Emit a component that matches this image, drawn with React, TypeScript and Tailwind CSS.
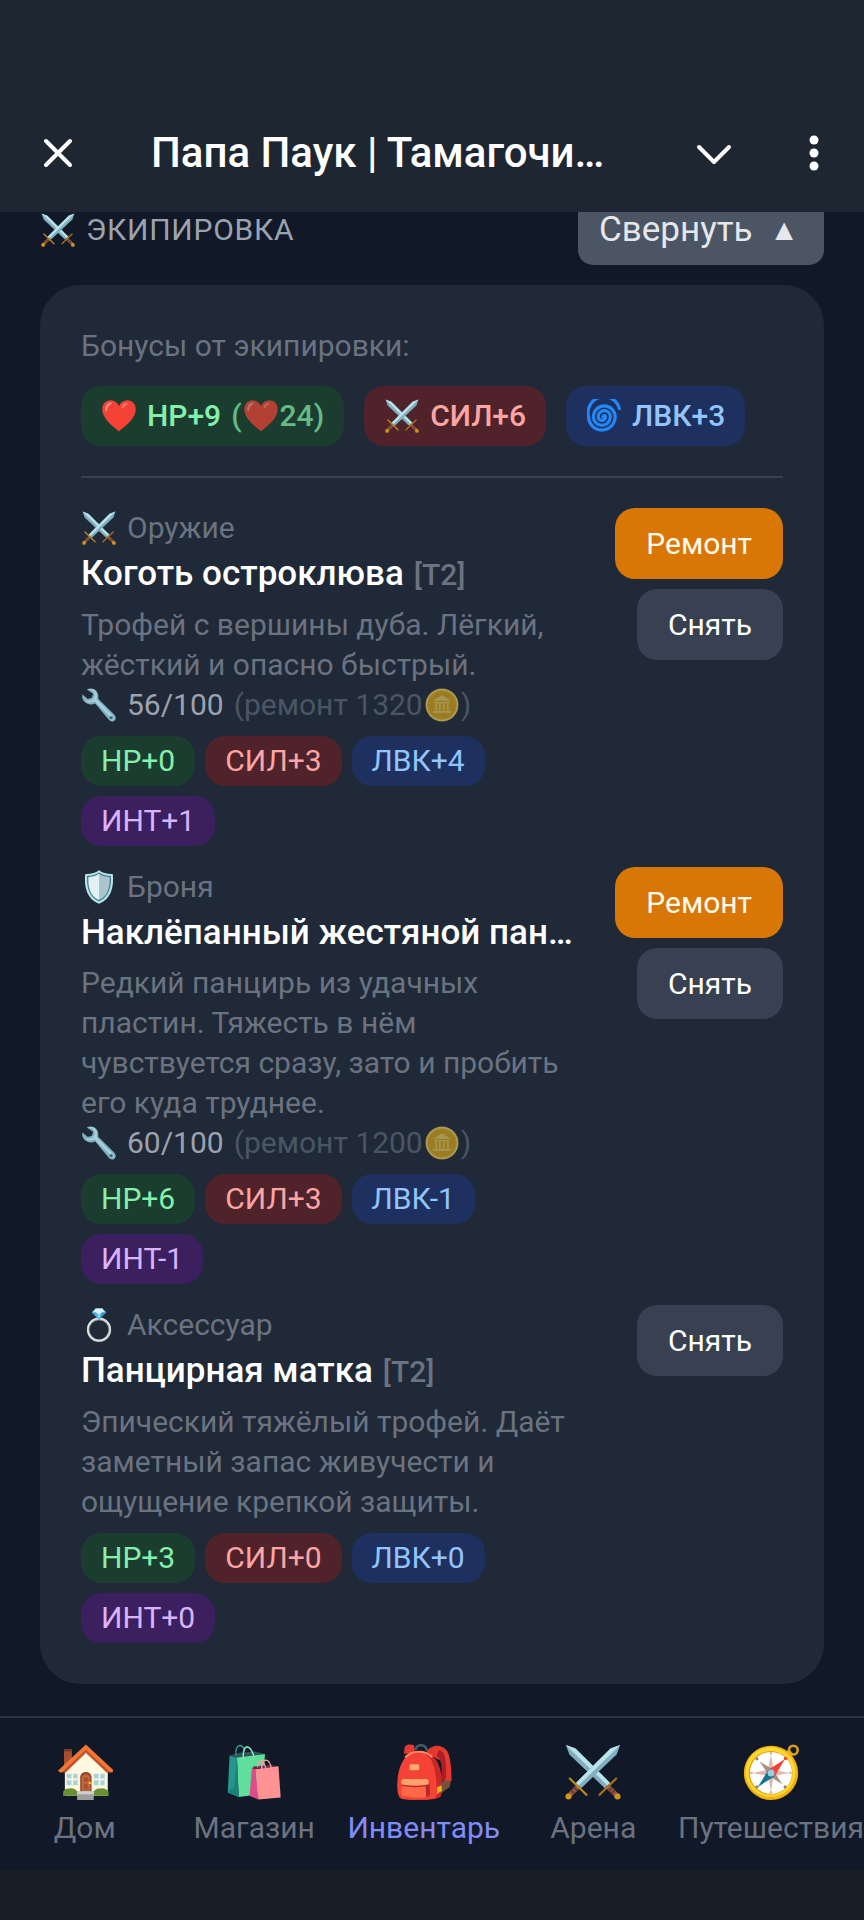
import { useState } from 'react'
import type { ReactNode } from 'react'

type StatKey = 'hp' | 'str' | 'agi' | 'int'

interface Item {
  slot: string
  icon: ReactNode
  name: string
  tier?: string
  description: string
  durability?: number
  repairCost?: number
  stats: Record<StatKey, number>
}

const STAT_LABELS: Record<StatKey, string> = {
  hp: 'HP',
  str: 'СИЛ',
  agi: 'ЛВК',
  int: 'ИНТ'
}

const STAT_COLORS: Record<StatKey, string> = {
  hp: 'bg-[#1a3d2f] text-[#86efac]',
  str: 'bg-[#4f2329] text-[#fca5a5]',
  agi: 'bg-[#1e3060] text-[#93c5fd]',
  int: 'bg-[#3c1f5f] text-[#d8b4fe]'
}

const STAT_ORDER: StatKey[] = ['hp', 'str', 'agi', 'int']

const SMALL = 'w-[34px] h-[34px] mx-px shrink-0'
const LARGE = 'w-14 h-14 shrink-0'

interface IconProps {
  className?: string
}

function SwordsIcon({ className = SMALL }: IconProps) {
  return (
    <svg viewBox="0 0 128 128" className={className} aria-hidden="true">
      <path d="M2 2 24 10 103 89 91 101 10 24z" fill="#82aec0" />
      <path d="M2 2 24 10 103 89 97 95z" fill="#b9e4ea" />
      <path d="M98 97 122 121" stroke="#8d5444" strokeWidth="11" />
      <path d="M117 79 79 116" stroke="#a8721a" strokeWidth="5" strokeLinecap="round" />
      <circle cx="120" cy="120" r="7" fill="#d39518" />
      <path d="M126 2 104 10 25 89 37 101 118 24z" fill="#82aec0" />
      <path d="M126 2 104 10 25 89 31 95z" fill="#b9e4ea" />
      <path d="M30 97 6 121" stroke="#8d5444" strokeWidth="11" />
      <path d="m20 99 9 9M14 105l9 9" stroke="#64342a" strokeWidth="3" />
      <path d="m108 99-9 9M114 105l-9 9" stroke="#64342a" strokeWidth="3" />
      <path d="M11 79 49 116" stroke="#c08a1c" strokeWidth="5" strokeLinecap="round" />
      <circle cx="8" cy="120" r="7" fill="#d39518" />
    </svg>
  )
}

function HeartIcon({ className = SMALL }: IconProps) {
  return (
    <svg viewBox="0 0 128 128" className={className} aria-hidden="true">
      <path
        d="M64 122C54 112 1 79 1 39 1 18 15 5 32 5c14 0 26 8 32 21C70 13 82 5 96 5c17 0 31 13 31 34 0 40-53 73-63 83z"
        fill="#f44336"
      />
      <path d="M12 42c0-17 8-27 19-29 6-1 8 4 3 7-8 5-13 10-15 22-1 6-7 6-7 0z" fill="#ff8a80" />
      <path d="M74 30c3-9 10-15 17-16 6-1 7 5 2 8-6 3-10 6-13 12-3 4-8 1-6-4z" fill="#ff7565" />
    </svg>
  )
}

function CycloneIcon({ className = SMALL }: IconProps) {
  return (
    <svg viewBox="0 0 128 128" className={className} aria-hidden="true">
      <path
        d="M60 67A5 5 0 0 1 70 67A14 14 0 0 1 42 67A23 23 0 0 1 88 67A32 32 0 0 1 24 67A41 41 0 0 1 106 67A50 50 0 0 1 6 67A56 56 0 0 1 122 36"
        fill="none"
        stroke="#2388f5"
        strokeWidth="12"
        strokeLinecap="round"
      />
    </svg>
  )
}

function WrenchIcon({ className = SMALL }: IconProps) {
  return (
    <svg viewBox="0 0 128 128" className={className} aria-hidden="true">
      <path
        d="M18 6C30-1 49 1 57 15c5 9 5 19 4 25l60 60c8 9 8 17 1 23-7 6-16 4-22-4L50 58C36 65 17 62 7 49 1 41-1 32 2 24l20 17 15-4 5-15z"
        fill="#82aec0"
      />
      <path d="M20 6c12-5 27-3 33 9 5 10 4 20 2 27l62 63c6 7 4 12 1 15L47 50C35 57 17 55 8 45c9 4 22 4 31-1 9-6 11-18 6-26C40 10 31 6 20 6z" fill="#b9e4ea" opacity=".65" />
      <circle cx="110" cy="111" r="6" fill="#2f6d80" />
    </svg>
  )
}

function CoinIcon({ className = SMALL }: IconProps) {
  return (
    <svg viewBox="0 0 128 128" className={className} aria-hidden="true">
      <circle cx="64" cy="64" r="62" fill="#f9c82b" />
      <circle cx="64" cy="64" r="58" fill="#fbc11a" stroke="#fff19a" strokeWidth="4" />
      <circle cx="64" cy="64" r="51" fill="#f0b414" />
      <path d="M64 27 98 48H30zM35 53h58v4H35zM31 87h66v6H31z" fill="#ffe36c" />
      <path d="M42 58v27M56 58v27M71 58v27M86 58v27" stroke="#ffe36c" strokeWidth="6" />
    </svg>
  )
}

function ShieldIcon({ className = SMALL }: IconProps) {
  return (
    <svg viewBox="0 0 128 128" className={className} aria-hidden="true">
      <path d="M64 1c14 11 32 15 52 14 5 52-8 96-52 112C20 111 7 67 12 15 32 16 50 12 64 1z" fill="#b9e4ea" />
      <path d="M64 9c13 9 29 13 45 13 3 46-10 82-45 97C29 104 16 68 19 22c16 0 32-4 45-13z" fill="#487f92" />
      <path d="M64 14c12 8 26 12 40 13 2 41-9 73-40 86z" fill="#a9c5cd" />
      <path d="M64 14c-12 8-26 12-40 13-2 41 9 73 40 86z" fill="#e1f1f4" />
    </svg>
  )
}

function RingIcon({ className = SMALL }: IconProps) {
  return (
    <svg viewBox="0 0 128 128" className={className} aria-hidden="true">
      <circle cx="64" cy="82" r="41" fill="none" stroke="#90a0a8" strokeWidth="10" />
      <circle cx="64" cy="81" r="42" fill="none" stroke="#e0e0e0" strokeWidth="6" />
      <path d="M51 2h26l14 14-27 28-27-28z" fill="#81d4fa" />
      <path d="M51 2h26l6 13-19 7-19-7z" fill="#d8f4ff" />
      <path d="m37 16 17 1 10 27z" fill="#4aa6d8" />
      <path d="m91 16-17 1-10 27z" fill="#3a91c4" />
    </svg>
  )
}

function HouseIcon() {
  return (
    <svg viewBox="0 0 128 128" className={LARGE} aria-hidden="true">
      <path d="M16 12h18v30L16 58z" fill="#a84f30" />
      <path d="M16 12h18v5H16z" fill="#7b3824" />
      <path d="M66 10 18 58v60h98V58z" fill="#fff8e1" />
      <path d="M66 13 18 60v8l48-46 50 46v-8z" fill="#c7bfa7" />
      <path d="M66 1 2 61l5 4 12-1 47-46 48 46 12 1 4-4z" fill="#f27637" />
      <path d="M66 13 12 64l7 1 47-46 48 46 7-1z" fill="#c54d22" />
      <path d="M22 68h25v26H22zM84 68h25v26H84z" fill="#a9d2db" />
      <path d="M35 68v26M22 81h25M97 68v26M84 81h25" stroke="#fff8e1" strokeWidth="4" />
      <path d="M53 109V76c0-16 26-16 26 0v33z" fill="#9c4a2d" />
      <path d="M57 107V78c0-11 18-11 18 0v29z" fill="#c4683f" />
      <path d="M61 80c0-6 10-6 10 0v6H61zM61 91h10v13H61z" fill="#a9532f" />
      <circle cx="75" cy="89" r="3" fill="#ffca28" />
      <path d="M14 118v-9c3-6 9-8 14-7 8-2 16 1 18 7v9zM84 118v-9c3-6 9-8 14-7 8-2 16 1 20 7v9z" fill="#689032" />
      <path d="M46 108h38v20H46z" fill="#9e9e9e" />
      <path d="M46 108h38v7H46z" fill="#cfcfcf" />
    </svg>
  )
}

function BagsIcon() {
  return (
    <svg viewBox="0 0 128 128" className={LARGE} aria-hidden="true">
      <path d="m8 27 17 4 64-8-23-6-35 3z" fill="#31535a" />
      <path d="m8 27 17 4 3 90-24-10z" fill="#26958a" />
      <path d="M25 31 89 23l-5 91-55 7z" fill="#5fdf9b" />
      <path d="m25 31-6 66-15 14 25 10z" fill="#1b7f7b" />
      <path d="M23 26C20-1 38-3 43 16M40 36C34-3 57-4 65 32" fill="none" stroke="#3ba895" strokeWidth="3" />
      <path d="M40 36C37 2 54-5 65 32" fill="none" stroke="#91f0bd" strokeWidth="3" />
      <path d="m59 56 9 3 52-7-15-4-41 3z" fill="#6f2d4b" />
      <path d="m59 56 9 3 6 68-20-8z" fill="#df4c8b" />
      <path d="m68 58 52-7 5 71-51 5z" fill="#ff9292" />
      <path d="M72 53c1-22 15-20 20 8M82 60c-3-28 16-32 22-3" fill="none" stroke="#f5a1a1" strokeWidth="3" />
    </svg>
  )
}

function BackpackIcon() {
  return (
    <svg viewBox="0 0 128 128" className={LARGE} aria-hidden="true">
      <path d="M45 14c0-15 24-15 25 1" fill="none" stroke="#455a64" strokeWidth="6" />
      <path d="M18 22 20 6c5-6 15-6 21-3l3 19zM69 19C80 0 104-1 116 15c8 10 11 40 11 69l-15 6-2-48-21-11z" fill="#e53930" />
      <path d="M98 14c14 1 17 20 16 61l-5 18-6-17c3-21 1-43-10-49z" fill="#aa1f26" />
      <path d="M108 84h17l-2 14-12 8-10 10-8-5z" fill="#76523a" />
      <path d="M18 37C28 13 73 8 90 34c15 18 18 59 13 84-2 11-65 13-88 7C-1 121 2 60 18 37z" fill="#c62828" />
      <path d="M14 42c15-31 55-32 68-2 9 20 14 60 9 83-9 5-63 6-78 2C-3 120 2 62 14 42z" fill="#f44336" />
      <path d="M21 31c17-18 46-17 62-1" fill="none" stroke="#ff8967" strokeWidth="5" />
      <rect x="31" y="46" width="22" height="14" rx="3" fill="#ffab70" />
      <path d="M14 89h60l2 25c0 7-6 8-31 8-27 0-34-2-33-10z" fill="#ff6846" />
      <path d="m67 89 9-6 2 29c0 7-5 9-9 9z" fill="#b7262a" />
      <rect x="12" y="80" width="63" height="15" rx="7" fill="#ffa16a" />
      <path d="M13 94c20 4 44 4 60 0" fill="none" stroke="#b7262a" strokeWidth="3" />
      <path d="m94 99 10-5 1 13-12 8z" fill="#fbb117" />
    </svg>
  )
}

function CompassIcon() {
  return (
    <svg viewBox="0 0 128 128" className={LARGE} aria-hidden="true">
      <circle cx="115" cy="14" r="10" fill="none" stroke="#d79d22" strokeWidth="6" />
      <path d="m95 17 11-4 9 9-7 12z" fill="#e2a610" />
      <circle cx="64" cy="66" r="62" fill="#f2b10f" />
      <circle cx="63" cy="64" r="57" fill="#fdd835" />
      <circle cx="63" cy="66" r="50" fill="#e0a30c" />
      <circle cx="64" cy="66" r="48" fill="#fff" />
      <path d="m64 24 6 35 36 7-36 7-6 36-7-36-36-7 36-7z" fill="#dfb9ab" />
      <path d="m38 40 29 17 23 35-29-18z" fill="#a98f84" />
      <path d="m96 34-23 39-15-14z" fill="#f44336" />
      <path d="m34 98 24-39 15 14z" fill="#1b718d" />
      <circle cx="64" cy="66" r="8" fill="#91d0e2" />
      <path d="M64 19v5M64 108v5M17 66h5M106 66h5" stroke="#d8a49b" strokeWidth="5" />
      <path d="m30 32 4 4M94 96l4 4M30 100l4-4" stroke="#9b746d" strokeWidth="6" />
      <circle cx="97" cy="33" r="4" fill="#f44336" />
    </svg>
  )
}

const ITEMS: Item[] = [
  {
    slot: 'Оружие',
    icon: <SwordsIcon />,
    name: 'Коготь остроклюва',
    tier: 'T2',
    description: 'Трофей с вершины дуба. Лёгкий, жёсткий и опасно быстрый.',
    durability: 56,
    repairCost: 1320,
    stats: { hp: 0, str: 3, agi: 4, int: 1 }
  },
  {
    slot: 'Броня',
    icon: <ShieldIcon />,
    name: 'Наклёпанный жестяной пан…',
    description: 'Редкий панцирь из удачных пластин. Тяжесть в нём чувствуется сразу, зато и пробить его куда труднее.',
    durability: 60,
    repairCost: 1200,
    stats: { hp: 6, str: 3, agi: -1, int: -1 }
  },
  {
    slot: 'Аксессуар',
    icon: <RingIcon />,
    name: 'Панцирная матка',
    tier: 'T2',
    description: 'Эпический тяжёлый трофей. Даёт заметный запас живучести и ощущение крепкой защиты.',
    stats: { hp: 3, str: 0, agi: 0, int: 0 }
  }
]

const TABS = [
  { id: 'home', label: 'Дом', icon: <HouseIcon /> },
  { id: 'shop', label: 'Магазин', icon: <BagsIcon /> },
  { id: 'inventory', label: 'Инвентарь', icon: <BackpackIcon /> },
  { id: 'arena', label: 'Арена', icon: <SwordsIcon className={LARGE} /> },
  { id: 'travel', label: 'Путешествия', icon: <CompassIcon /> }
]

function formatStat(key: StatKey, value: number) {
  return `${STAT_LABELS[key]}${value < 0 ? '' : '+'}${value}`
}

function BonusChip({ stat, children }: { stat: StatKey; children: ReactNode }) {
  return (
    <span className={`flex items-center gap-[10px] h-[60px] px-5 rounded-[20px] font-medium ${STAT_COLORS[stat]}`}>
      {children}
    </span>
  )
}

function TopBar() {
  return (
    <header className="sticky top-0 z-10 flex items-center h-[212px] pt-[94px] pl-[38px] pr-[30px] bg-[#1e2731] text-white">
      <button type="button" aria-label="Закрыть" className="shrink-0">
        <svg viewBox="0 0 40 40" className="w-10 h-10" fill="none" stroke="currentColor" strokeWidth="4" strokeLinecap="round">
          <path d="m8 8 24 24M32 8 8 32" />
        </svg>
      </button>
      <h1 className="flex-1 min-w-0 ml-[73px] truncate text-[42px] leading-[56px] font-medium">Папа Паук | Тамагочи…</h1>
      <button type="button" aria-label="Свернуть окно" className="shrink-0">
        <svg viewBox="0 0 40 40" className="w-10 h-10" fill="none" stroke="currentColor" strokeWidth="4" strokeLinecap="round" strokeLinejoin="round">
          <path d="m5 14 15 15 15-15" />
        </svg>
      </button>
      <button type="button" aria-label="Меню" className="shrink-0 ml-[60px]">
        <svg viewBox="0 0 40 40" className="w-10 h-10" fill="currentColor">
          <circle cx="20" cy="7" r="4.5" />
          <circle cx="20" cy="20" r="4.5" />
          <circle cx="20" cy="33" r="4.5" />
        </svg>
      </button>
    </header>
  )
}

function EquipmentRow({ item }: { item: Item }) {
  return (
    <li className="flex items-start gap-9">
      <div className="flex-1 min-w-0">
        <div className="flex items-center gap-[10px] text-[#6b7280]">
          {item.icon}
          <span>{item.slot}</span>
        </div>
        <h3 className="truncate text-[35px] leading-[51px] font-medium text-white">
          {item.name}
          {item.tier && <span className="ml-[10px] text-[30px] text-[#6b7280]">[{item.tier}]</span>}
        </h3>
        <p className="mt-[5px] text-[#6b7280]">{item.description}</p>
        {item.durability !== undefined && (
          <div className="flex items-center gap-[10px] text-[#9ca3af]">
            <WrenchIcon />
            <span>{item.durability}/100</span>
            <span className="flex items-center text-[#4b5563]">
              (ремонт {item.repairCost}
              <CoinIcon className="w-[34px] h-[34px] mx-[2px] opacity-60" />)
            </span>
          </div>
        )}
        <div className="flex flex-wrap gap-[10px] mt-[11px]">
          {STAT_ORDER.map((key) => (
            <span key={key} className={`h-[50px] px-5 py-[5px] rounded-[20px] ${STAT_COLORS[key]}`}>
              {formatStat(key, item.stats[key])}
            </span>
          ))}
        </div>
      </div>
      <div className="flex flex-col items-end gap-[10px] shrink-0">
        {item.repairCost !== undefined && (
          <button type="button" className="h-[71px] px-[31px] rounded-[20px] bg-[#d97706] text-[#fffbeb]">
            Ремонт
          </button>
        )}
        <button type="button" className="h-[71px] px-[31px] rounded-[20px] bg-[#374151] text-white">
          Снять
        </button>
      </div>
    </li>
  )
}

export default function App() {
  const [expanded, setExpanded] = useState(true)
  const [tab, setTab] = useState('inventory')

  return (
    <div className="flex flex-col min-h-screen bg-[#111827] font-[Roboto,'Noto_Sans',sans-serif] text-[30px] leading-[40px]">
      <TopBar />

      <main className="flex-1 px-10 pb-8 -mt-[17px]">
        <div className="flex items-center justify-between mb-5">
          <h2 className="flex items-center gap-[10px] tracking-wide uppercase text-[#9ca3af]">
            <SwordsIcon />
            Экипировка
          </h2>
          <button
            type="button"
            aria-expanded={expanded}
            onClick={() => setExpanded(!expanded)}
            className="flex items-center justify-between w-[246px] h-[70px] pl-[21px] pr-[25px] rounded-[15px] bg-[#4b5563] text-[35px] text-[#e5e7eb]"
          >
            Свернуть
            <span className="text-[30px]">{expanded ? '▲' : '▼'}</span>
          </button>
        </div>

        {expanded && (
          <section className="p-[41px] rounded-[40px] bg-[#1f2937]">
            <p className="text-[#6b7280]">Бонусы от экипировки:</p>
            <div className="flex flex-wrap gap-5 mt-5 pb-[30px] mb-[30px] border-b-2 border-[#374151]">
              <BonusChip stat="hp">
                <HeartIcon />
                HP+9
                <span className="flex items-center opacity-70">
                  (<HeartIcon className="w-[34px] h-[34px] mx-[2px]" />
                  24)
                </span>
              </BonusChip>
              <BonusChip stat="str">
                <SwordsIcon />
                СИЛ+6
              </BonusChip>
              <BonusChip stat="agi">
                <CycloneIcon />
                ЛВК+3
              </BonusChip>
            </div>
            <ul className="flex flex-col gap-[21px]">
              {ITEMS.map((item) => (
                <EquipmentRow key={item.slot} item={item} />
              ))}
            </ul>
          </section>
        )}
      </main>

      <footer className="sticky bottom-0 bg-[#111827]">
        <nav className="flex h-[154px] border-t-2 border-[#2d3643]">
          {TABS.map(({ id, label, icon }) => (
            <button
              key={id}
              type="button"
              onClick={() => setTab(id)}
              className={`flex flex-1 flex-col items-center gap-2 pt-[26px] ${tab === id ? 'text-[#818cf8]' : 'text-[#6b7280]'}`}
            >
              {icon}
              <span>{label}</span>
            </button>
          ))}
        </nav>
        <div className="h-[50px] bg-[#171e26]" />
      </footer>
    </div>
  )
}
